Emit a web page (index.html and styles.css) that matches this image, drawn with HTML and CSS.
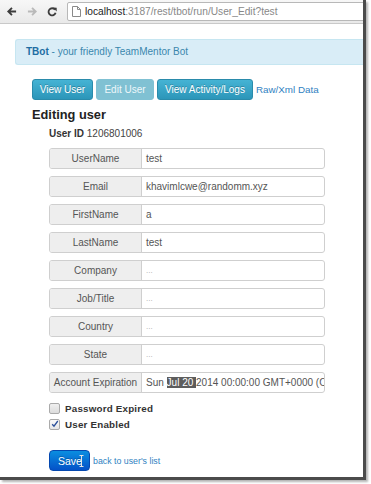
FILE: index.html
```html
<!DOCTYPE html>
<html>
<head>
<meta charset="utf-8">
<link rel="stylesheet" href="styles.css">
</head>
<body>
<div class="window">
  <div class="toolbar">
    <svg class="nav back" width="11" height="11" viewBox="0 0 12 12"><path d="M11 6H2.5M6.5 2L2.5 6l4 4" fill="none" stroke="#3c3c3c" stroke-width="2"/></svg>
    <svg class="nav fwd" width="11" height="11" viewBox="0 0 12 12"><path d="M1 6h8.5M5.5 2l4 4-4 4" fill="none" stroke="#b9b9b9" stroke-width="2"/></svg>
    <svg class="nav reload" width="10" height="10" viewBox="0 0 12 12"><path d="M9.6 3.2A4.3 4.3 0 1 0 10.3 7" fill="none" stroke="#3c3c3c" stroke-width="2.2"/><path d="M7 0.6L11.6 0.8v4.6z" fill="#3c3c3c"/></svg>
    <div class="urlbox">
      <svg class="pageicon" width="9" height="11" viewBox="0 0 9 11"><path d="M0.5 0.5h5l3 3v7h-8z M5.5 0.5v3h3" fill="#fff" stroke="#8a8a8a" stroke-width="1"/></svg>
      <span class="host">localhost</span><span class="path">:3187/rest/tbot/run/User_Edit?test</span>
    </div>
  </div>
  <div class="page">
    <div class="alert"><b>TBot</b> - your friendly TeamMentor Bot</div>
    <div class="main">
      <div class="tabs">
        <a class="btn btn-info">View User</a>
        <a class="btn btn-info disabled">Edit User</a>
        <a class="btn btn-info">View Activity/Logs</a>
        <a class="rawlink">Raw/Xml Data</a>
      </div>
      <h3 class="title">Editing user</h3>
      <div class="form">
        <div class="userid"><b>User ID</b> 1206801006</div>
        <div class="row"><span class="addon">UserName</span><span class="field">test</span></div>
        <div class="row"><span class="addon">Email</span><span class="field">khavimlcwe@randomm.xyz</span></div>
        <div class="row"><span class="addon">FirstName</span><span class="field">a</span></div>
        <div class="row"><span class="addon">LastName</span><span class="field">test</span></div>
        <div class="row"><span class="addon">Company</span><span class="field ph">...</span></div>
        <div class="row"><span class="addon">Job/Title</span><span class="field ph">...</span></div>
        <div class="row"><span class="addon">Country</span><span class="field ph">...</span></div>
        <div class="row"><span class="addon">State</span><span class="field ph">...</span></div>
        <div class="row"><span class="addon">Account Expiration</span><span class="field clip">Sun <span class="sel">Jul 20 </span>2014 00:00:00 GMT+0000 (C</span></div>
        <label class="check"><span class="box"></span>Password Expired</label>
        <label class="check"><span class="box checked"><svg width="8" height="8" viewBox="0 0 8 8"><path d="M1.2 4.2l1.8 2L6.8 1" fill="none" stroke="#2a4f9a" stroke-width="1.3"/></svg></span>User Enabled</label>
        <div class="actions">
          <a class="btn btn-primary">Save<svg class="ibeam" width="5" height="12" viewBox="0 0 5 12"><path d="M0.5 0.5h4M2.5 0.5v11M0.5 11.5h4" fill="none" stroke="#e4e4e4" stroke-width="1"/></svg></a>
          <a class="backlink">back to user's list</a>
        </div>
      </div>
    </div>
  </div>
</div>
</body>
</html>
```
FILE: styles.css
```css
html, body {
  margin: 0;
  padding: 0;
  background: #fff;
}
body {
  width: 371px;
  height: 484px;
  overflow: hidden;
  font-family: "Liberation Sans", Arial, sans-serif;
}
.window {
  width: 363px;
  height: 477px;
  border-right: 3px solid #4b4b4b;
  border-bottom: 3px solid #4b4b4b;
  box-shadow: 2px 2px 2px #b5b5b5;
  overflow: hidden;
  background: #fff;
}
.toolbar {
  height: 23px;
  border-bottom: 1px solid #c9c9c9;
  background: linear-gradient(#f7f7f7, #e9e9e9);
  display: flex;
  align-items: center;
}
.nav {
  display: block;
}
.back { margin-left: 6px; }
.fwd { margin-left: 10px; }
.reload { margin-left: 9px; }
.urlbox {
  margin-left: 10px;
  flex: 1;
  height: 17px;
  margin-right: -4px;
  border: 1px solid #b8b8b8;
  border-radius: 2px;
  background: #fff;
  display: flex;
  align-items: center;
  font-size: 10.2px;
  color: #888;
  white-space: nowrap;
}
.pageicon {
  margin-left: 4px;
  margin-right: 4px;
}
.host { color: #222; }
.page {
  padding-top: 15px;
}
.alert {
  margin-left: 15px;
  height: 24px;
  line-height: 24px;
  border: 1px solid #c6e6f1;
  border-right: none;
  border-radius: 3px 0 0 3px;
  background: #d9edf7;
  color: #3a87ad;
  font-size: 10px;
  padding-left: 10px;
}
.alert b {
  color: #1f6da3;
}
.main {
  padding-left: 32px;
}
.tabs {
  margin-top: 14px;
  display: flex;
  align-items: center;
  gap: 3px;
}
.btn {
  display: inline-block;
  height: 21px;
  line-height: 20px;
  padding: 0 8px;
  border-radius: 3px;
  color: #fff;
  font-size: 10px;
  text-shadow: 0 -1px 0 rgba(0,0,0,0.25);
  box-sizing: border-box;
}
.btn-info {
  background: linear-gradient(#45b3d4, #2c96b9);
  border: 1px solid #2a8bab;
}
.btn-info.disabled {
  background: #80c1d3;
  border-color: #80c1d3;
  color: #eef7fa;
  text-shadow: none;
}
.tabs .btn:first-child { width: 61px; text-align: center; padding: 0; }
.tabs .btn.disabled { width: 58px; text-align: center; padding: 0; }
.tabs .btn:nth-child(3) { width: 96px; text-align: center; padding: 0; }
.rawlink {
  color: #2f7fc1;
  font-size: 9.8px;
}
.title {
  margin: 7px 0 0 0;
  font-size: 12.8px;
  line-height: 15px;
  color: #222;
  font-weight: bold;
}
.form {
  padding-left: 17px;
}
.userid {
  margin-top: 6px;
  font-size: 10px;
  line-height: 12px;
  color: #444;
}
.userid b { color: #333; }
.row {
  margin-top: 7px;
  width: 276px;
  height: 21px;
  display: flex;
  box-sizing: border-box;
  border: 1px solid #cfcfcf;
  border-radius: 3px;
  font-size: 10px;
  overflow: hidden;
}
.userid + .row { margin-top: 8px; }
.addon {
  width: 91px;
  flex: none;
  background: #eee;
  border-right: 1px solid #cfcfcf;
  color: #555;
  text-align: center;
  line-height: 19px;
}
.field {
  flex: 1;
  padding-left: 4px;
  color: #555;
  line-height: 19px;
  white-space: nowrap;
  overflow: hidden;
}
.field.ph {
  color: #aaa;
  font-size: 8px;
}
.sel {
  background: #5d5d5d;
  color: #fff;
  white-space: pre;
}
.check {
  display: flex;
  align-items: center;
  font-size: 9.8px;
  font-weight: bold;
  color: #333;
  letter-spacing: 0.2px;
  height: 12px;
}
.check:first-of-type { margin-top: 9px; }
.check + .check { margin-top: 4px; }
.box {
  width: 9px;
  height: 9px;
  border: 1px solid #aaa;
  border-radius: 2px;
  background: linear-gradient(#f0f0f0, #dcdcdc);
  margin-right: 5px;
  display: flex;
  align-items: center;
  justify-content: center;
}
.box.checked {
  background: linear-gradient(#fafafa, #e6e6e6);
}
.actions {
  margin-top: 20px;
  display: flex;
  align-items: center;
  gap: 3px;
}
.btn-primary {
  width: 41px;
  padding: 0 0 0 8px;
  background: linear-gradient(#0a8ee0, #0452c8);
  border: 1px solid #0448b0;
  border-radius: 4px;
  font-size: 10.5px;
  position: relative;
}
.ibeam {
  position: absolute;
  left: 29px;
  top: 4px;
}
.backlink {
  color: #2f7fc1;
  font-size: 8.8px;
}
```
